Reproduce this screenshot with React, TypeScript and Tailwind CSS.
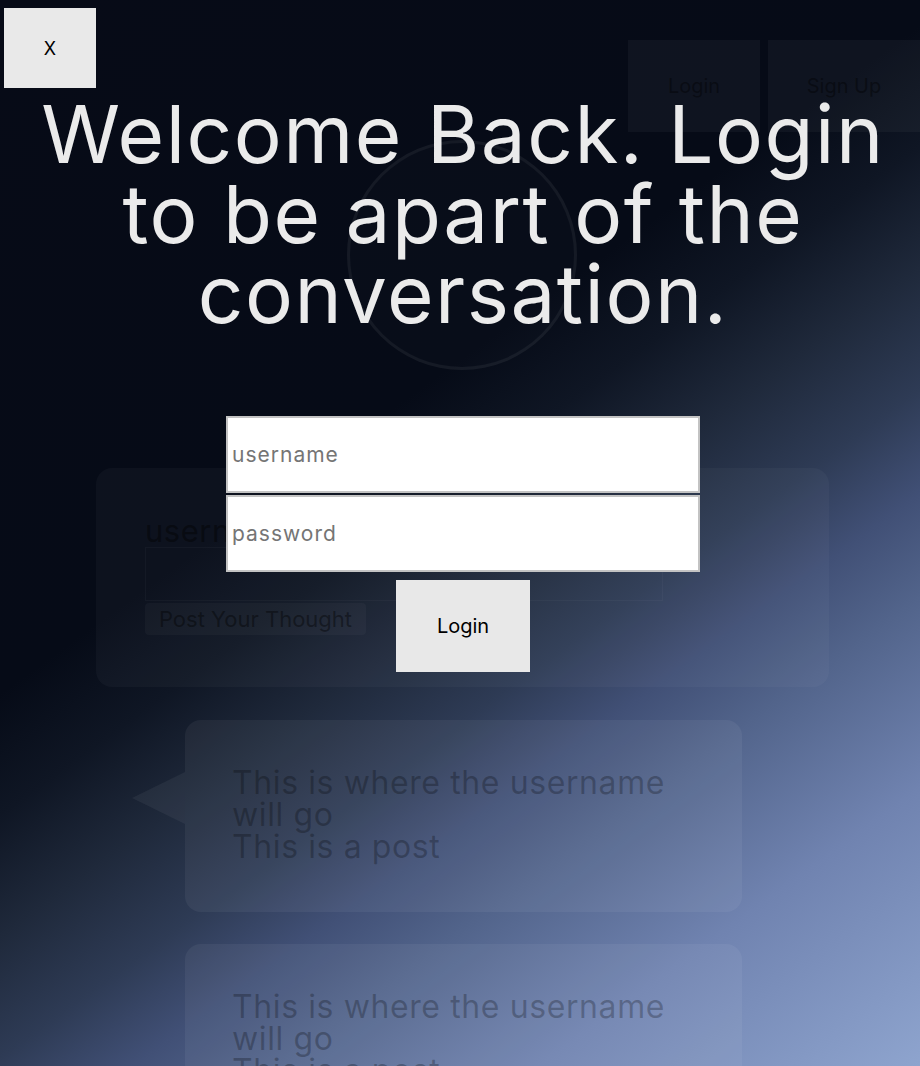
export default function App() {
  return (
    <div className="relative h-[1066px] w-[920px] overflow-hidden bg-[linear-gradient(144deg,#070b17_0%,#060b17_40%,#0f1624_47%,#1f293b_54%,#2e3b55_61%,#415076_67%,#52648b_73%,#7083b0_84%,#8ea4ce_100%)] font-['Inter','Open_Sans',sans-serif]">
      {/* background page (dimmed behind the modal) */}
      <div className="flex flex-col">
        <header className="flex justify-end gap-2 pt-10">
          <div className="flex h-[92px] w-[132px] items-center justify-center bg-white/[0.04] text-[20px] text-black/40">
            Login
          </div>
          <div className="flex h-[92px] w-[152px] items-center justify-center bg-white/[0.04] text-[20px] text-black/40">
            Sign Up
          </div>
        </header>
        <div className="mt-2 flex justify-center pl-1">
          <div className="h-[230px] w-[230px] rounded-full border-[3px] border-white/[0.05] bg-white/[0.01]" />
        </div>
        <div className="ml-[96px] mt-[98px] flex h-[219px] w-[733px] flex-col rounded-2xl bg-white/[0.03] pl-[49px] pt-[48px]">
          <div className="text-[31px] leading-[30px] tracking-[0.5px] text-black/40">username</div>
          <div className="mt-[1px] h-[54px] w-[518px] border border-white/[0.03]" />
          <div className="mt-[2px] flex h-[32px] w-[221px] items-center justify-center rounded bg-white/[0.03] text-[22px] text-black/40">
            Post Your Thought
          </div>
        </div>
        <div className="relative ml-[185px] mt-[33px] h-[192px] w-[557px] rounded-2xl bg-white/[0.05] pl-[47px] pt-[47px] text-[32px] leading-[32px] tracking-[0.6px] text-black/25">
          <svg className="absolute left-[-53px] top-[52px]" width="53" height="52" viewBox="0 0 53 52">
            <polygon points="53,0 0,26 53,52" fill="rgba(255,255,255,0.05)" />
          </svg>
          <div className="w-[450px]">This is where the username will go</div>
          <div>This is a post</div>
        </div>
        <div className="relative ml-[185px] mt-[32px] h-[192px] w-[557px] rounded-2xl bg-white/[0.05] pl-[47px] pt-[47px] text-[32px] leading-[32px] tracking-[0.6px] text-black/25">
          <div className="w-[450px]">This is where the username will go</div>
          <div>This is a post</div>
        </div>
      </div>

      {/* modal overlay */}
      <div className="absolute inset-0 flex flex-col">
        <button className="ml-1 mt-2 flex h-[80px] w-[92px] items-center justify-center bg-[#e9e9e9] text-[18px] text-black">
          X
        </button>
        <div className="flex flex-col items-center pl-[6px]">
          <h1 className="mt-[6px] text-center text-[80px] font-normal leading-[80px] tracking-[1.5px] text-[#ebebeb]">
            <span className="block">Welcome Back. Login</span>
            <span className="block">to be apart of the</span>
            <span className="block">conversation.</span>
          </h1>
          <input
            className="mt-[82px] h-[77px] w-[474px] border-2 border-[#c3c3c3] bg-white pl-1 text-[21px] tracking-[1px] text-black outline-none placeholder:text-[#757575]"
            placeholder="username"
          />
          <input
            type="password"
            className="mt-[2px] h-[77px] w-[474px] border-2 border-[#c3c3c3] bg-white pl-1 text-[21px] tracking-[1px] text-black outline-none placeholder:text-[#757575]"
            placeholder="password"
          />
          <button className="mt-2 h-[92px] w-[134px] bg-[#e8e8e8] text-[20px] text-black">Login</button>
        </div>
      </div>
    </div>
  );
}
